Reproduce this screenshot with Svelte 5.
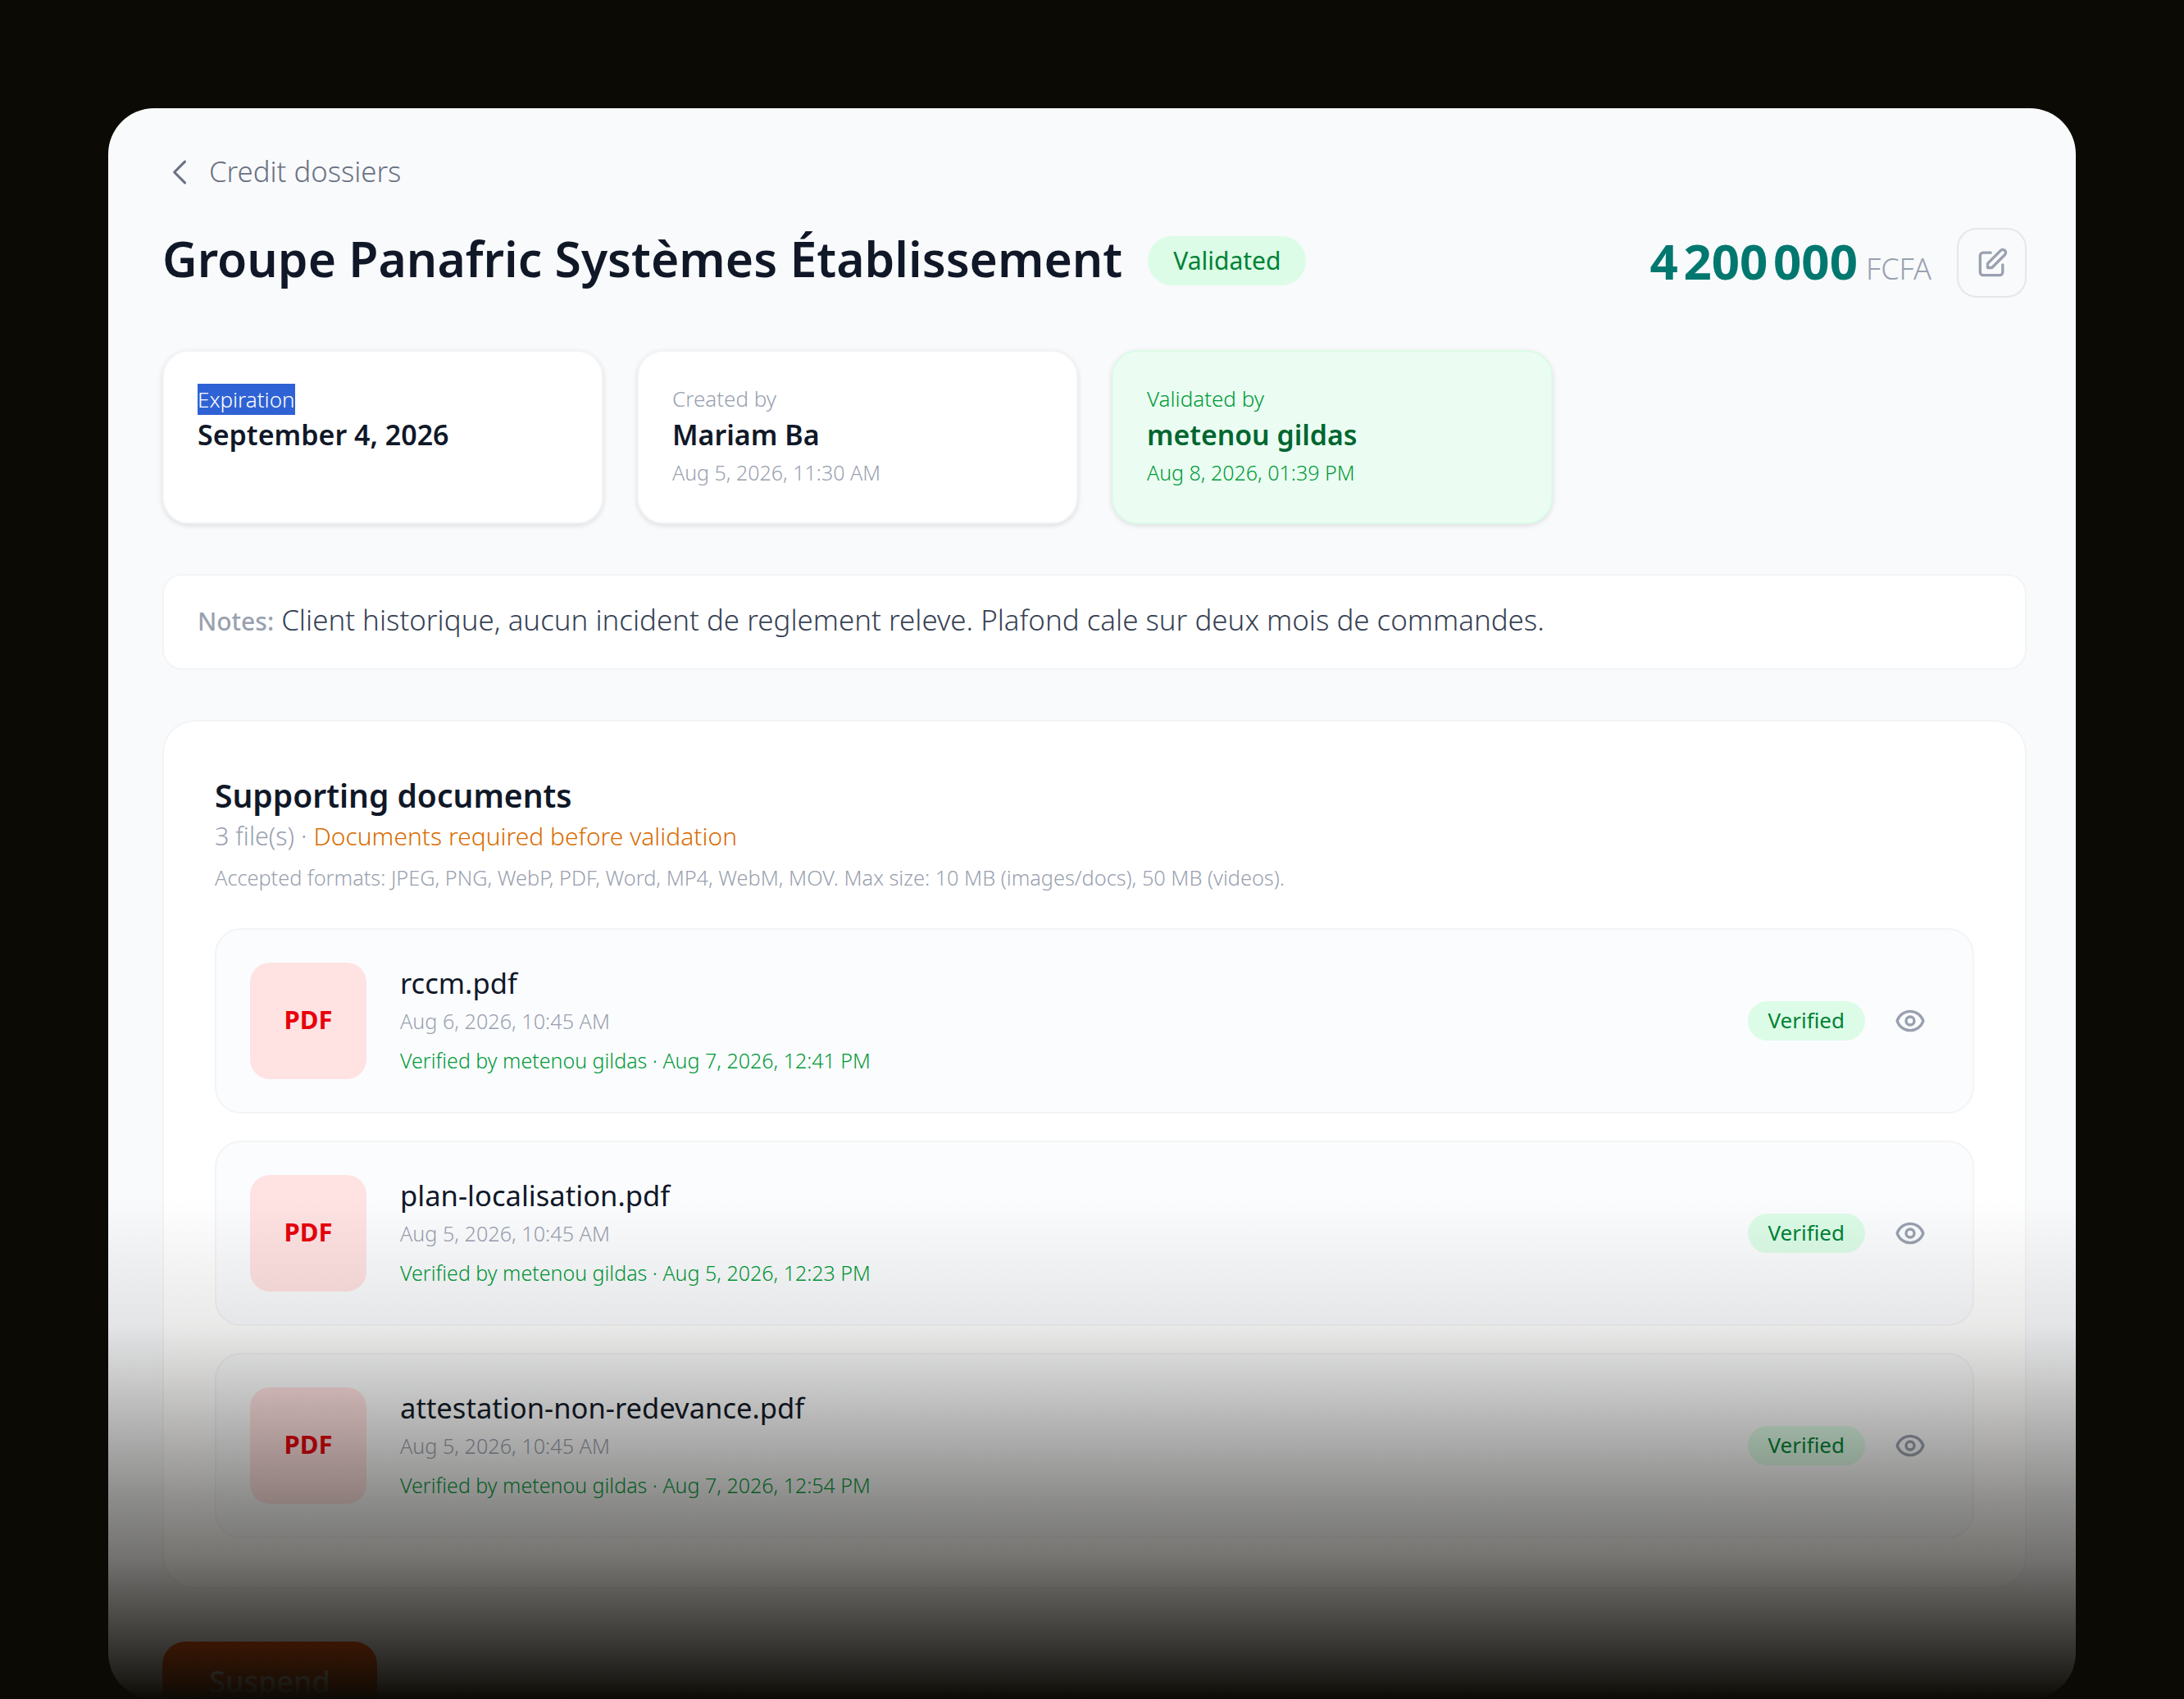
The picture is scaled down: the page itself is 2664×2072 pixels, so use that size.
<script>
  const cards = [
    { label: 'Created by', value: 'Mariam Ba', date: 'Aug 5, 2026, 11:30 AM' },
  ];
  const docs = [
    { name: 'rccm.pdf', date: 'Aug 6, 2026, 10:45 AM', verified: 'Verified by metenou gildas · Aug 7, 2026, 12:41 PM' },
    { name: 'plan-localisation.pdf', date: 'Aug 5, 2026, 10:45 AM', verified: 'Verified by metenou gildas · Aug 5, 2026, 12:23 PM' },
    { name: 'attestation-non-redevance.pdf', date: 'Aug 5, 2026, 10:45 AM', verified: 'Verified by metenou gildas · Aug 7, 2026, 12:54 PM' },
  ];
</script>

<div class="page">
  <main class="panel">
    <a class="back" href="#top">
      <svg viewBox="0 0 24 24" class="chev"><path d="M15 19l-7-7 7-7" /></svg>
      <span>Credit dossiers</span>
    </a>

    <header class="head">
      <div class="head-left">
        <h1>Groupe Panafric Systèmes Établissement</h1>
        <span class="status">Validated</span>
      </div>
      <div class="head-right">
        <div class="amount"><strong>4 200 000</strong><span>FCFA</span></div>
        <button class="edit" aria-label="Edit">
          <svg viewBox="0 0 24 24"><path d="M11 5H6a2 2 0 00-2 2v11a2 2 0 002 2h11a2 2 0 002-2v-5m-1.414-9.414a2 2 0 112.828 2.828L11.828 15H9v-2.828l8.586-8.586z" /></svg>
        </button>
      </div>
    </header>

    <section class="cards">
      <div class="card">
        <div class="label"><span class="sel">Expiration</span></div>
        <div class="value">September 4, 2026</div>
      </div>
      {#each cards as c}
        <div class="card">
          <div class="label">{c.label}</div>
          <div class="value">{c.value}</div>
          <div class="date">{c.date}</div>
        </div>
      {/each}
      <div class="card green">
        <div class="label">Validated by</div>
        <div class="value">metenou gildas</div>
        <div class="date">Aug 8, 2026, 01:39 PM</div>
      </div>
    </section>

    <section class="notes"><b>Notes:</b> Client historique, aucun incident de reglement releve. Plafond cale sur deux mois de commandes.</section>

    <section class="docs">
      <h2>Supporting documents</h2>
      <p class="count">3 file(s) · <span>Documents required before validation</span></p>
      <p class="formats">Accepted formats: JPEG, PNG, WebP, PDF, Word, MP4, WebM, MOV. Max size: 10 MB (images/docs), 50 MB (videos).</p>
      <div class="list">
        {#each docs as d}
          <article class="doc">
            <div class="thumb">PDF</div>
            <div class="info">
              <div class="name">{d.name}</div>
              <div class="when">{d.date}</div>
              <div class="ver">{d.verified}</div>
            </div>
            <span class="badge">Verified</span>
            <svg class="eye" viewBox="0 0 24 24">
              <path d="M15 12a3 3 0 11-6 0 3 3 0 016 0z" />
              <path d="M2.458 12C3.732 7.943 7.523 5 12 5c4.478 0 8.268 2.943 9.542 7-1.274 4.057-5.064 7-9.542 7-4.477 0-8.268-2.943-9.542-7z" />
            </svg>
          </article>
        {/each}
      </div>
    </section>

    <button class="suspend">Suspend</button>
  </main>
  <div class="fade"></div>
</div>

<style>
  :global(body) { margin: 0; background: #0c0a05; }
  .page {
    position: relative;
    width: 2664px;
    height: 2072px;
    padding: 132px 132px 0;
    box-sizing: border-box;
    overflow: hidden;
    background: #0c0a05;
    font-family: "Noto Sans", "Open Sans", sans-serif;
  }
  .panel {
    box-sizing: border-box;
    width: 2400px;
    height: 1940px;
    padding: 50px 60px 0 66px;
    background: #f9fafc;
    border-radius: 56px;
    overflow: hidden;
  }
  .back {
    display: flex;
    align-items: center;
    gap: 13px;
    height: 56px;
    color: #6a7282;
    font-size: 34.7px;
    line-height: 52px;
    font-weight: 300;
    text-decoration: none;
  }
  .back span { padding-bottom: 3px; }
  .chev { width: 44px; height: 44px; fill: none; stroke: #6a7282; stroke-width: 1.7; stroke-linecap: round; stroke-linejoin: round; }
  .head { display: flex; justify-content: space-between; align-items: center; margin-top: 40px; height: 85px; }
  .head-left { display: flex; align-items: center; gap: 31px; }
  h1 { margin: 0; padding-bottom: 10px; font-size: 58.8px; font-weight: 600; color: #101828; line-height: 85px; }
  .status {
    display: flex; align-items: center; height: 60px; padding: 0 31px; margin-bottom: 6px; border-radius: 30px;
    background: #dcfce7; color: #008236; font-size: 30px; font-weight: 400;
  }
  .head-right { display: flex; align-items: center; gap: 31px; }
  .amount { display: flex; align-items: baseline; gap: 10px; padding-bottom: 6px; color: #99a1af; font-size: 36px; font-weight: 300; }
  .amount strong { color: #00786f; font-size: 60px; font-weight: 700; word-spacing: -9px; }
  .edit {
    display: flex; align-items: center; justify-content: center;
    width: 85px; height: 85px; padding: 0; box-sizing: border-box;
    background: transparent; border: 2px solid #e5e7eb; border-radius: 24px;
  }
  .edit svg { width: 44px; height: 44px; fill: none; stroke: #99a1af; stroke-width: 1.8; stroke-linecap: round; stroke-linejoin: round; }
  .cards { display: grid; grid-template-columns: repeat(3, 538px); gap: 41px; margin-top: 64px; }
  .card {
    box-sizing: border-box; height: 212px; padding: 37px 41px;
    background: #fff; border: 2px solid #f3f4f6; border-radius: 32px;
    box-shadow: 0 2px 6px rgba(0, 0, 0, .12);
  }
  .label { font-size: 26px; font-weight: 300; color: #99a1af; line-height: 40px; }
  .sel { display: inline-block; margin-top: 2px; line-height: 38px; vertical-align: top; background: #2f62d4; color: #fff; }
  .value { font-size: 34px; font-weight: 600; color: #101828; line-height: 48px; }
  .date { font-size: 25px; font-weight: 300; color: #99a1af; line-height: 40px; margin-top: 2px; }
  .green { background: #ebfdf2; border-color: #dcfce7; }
  .green .label, .green .date { color: #009a39; font-weight: 300; }
  .green .label { font-size: 26px; }
  .green .value { color: #016630; font-size: 33.8px; }
  .notes {
    box-sizing: border-box; height: 117px; margin-top: 61px; padding: 0 41px;
    display: block; line-height: 108px;
    background: #fff; border: 2px solid #f3f4f6; border-radius: 24px;
    font-size: 34.9px; font-weight: 300; color: #364153;
  }
  .notes b { font-size: 30px; font-weight: 500; color: #99a1af; }
  .docs {
    box-sizing: border-box; height: 1060px; margin-top: 61px; padding: 62px;
    background: #fff; border: 2px solid #f3f4f6; border-radius: 40px;
  }
  h2 { margin: 0; font-size: 39px; font-weight: 600; color: #101828; line-height: 56px; }
  .count { margin: 0; font-size: 30.5px; font-weight: 300; color: #99a1af; line-height: 42px; }
  .count span { color: #d96c00; font-size: 30px; font-weight: 300; }
  .formats { margin: 11px 0 0; font-size: 25.3px; font-weight: 300; color: #99a1af; line-height: 36px; }
  .list { display: flex; flex-direction: column; gap: 33px; margin-top: 44px; }
  .doc {
    box-sizing: border-box; height: 226px; padding: 0 41px;
    display: flex; align-items: center; gap: 41px;
    background: #fbfcfe; border: 2px solid #f3f4f6; border-radius: 32px;
  }
  .thumb {
    width: 142px; height: 142px; flex: none; border-radius: 24px; padding-bottom: 5px; box-sizing: border-box;
    display: flex; align-items: center; justify-content: center;
    background: #ffe2e2; color: #e7000b; font-size: 31px; font-weight: 700;
  }
  .info { flex: 1; min-width: 0; margin-top: -3px; }
  .name { font-size: 34.6px; font-weight: 400; color: #101828; line-height: 48px; }
  .when { font-size: 25.2px; font-weight: 300; color: #99a1af; line-height: 40px; margin-top: 2px; }
  .ver { font-size: 25px; font-weight: 300; color: #009a39; line-height: 40px; margin-top: 8px; }
  .badge {
    display: flex; align-items: center; height: 48px; padding: 0 25px 2px; box-sizing: border-box; border-radius: 24px;
    background: #dcfce7; color: #008236; font-size: 26px; font-weight: 400;
  }
  .eye { width: 40px; height: 40px; margin: 0 15px 0 -6px; fill: none; stroke: #99a1af; stroke-width: 2; stroke-linecap: round; stroke-linejoin: round; }
  .suspend {
    display: block; width: 262px; height: 98px; margin-top: 64px; padding: 0; border: none; border-radius: 28px;
    background: #f54900; color: #fff; font: 500 36px/40px "Noto Sans", sans-serif;
  }
  .fade {
    position: absolute; left: 0; right: 0; top: 1460px; bottom: 0; pointer-events: none;
    background: linear-gradient(to bottom,
      rgba(12, 10, 5, 0) 0,
      rgba(12, 10, 5, .09) 157px,
      rgba(12, 10, 5, .2) 222px,
      rgba(12, 10, 5, .46) 368px,
      rgba(12, 10, 5, .57) 441px,
      rgba(12, 10, 5, .8) 540px,
      rgba(12, 10, 5, .93) 590px,
      rgba(12, 10, 5, 1) 612px);
  }
</style>
